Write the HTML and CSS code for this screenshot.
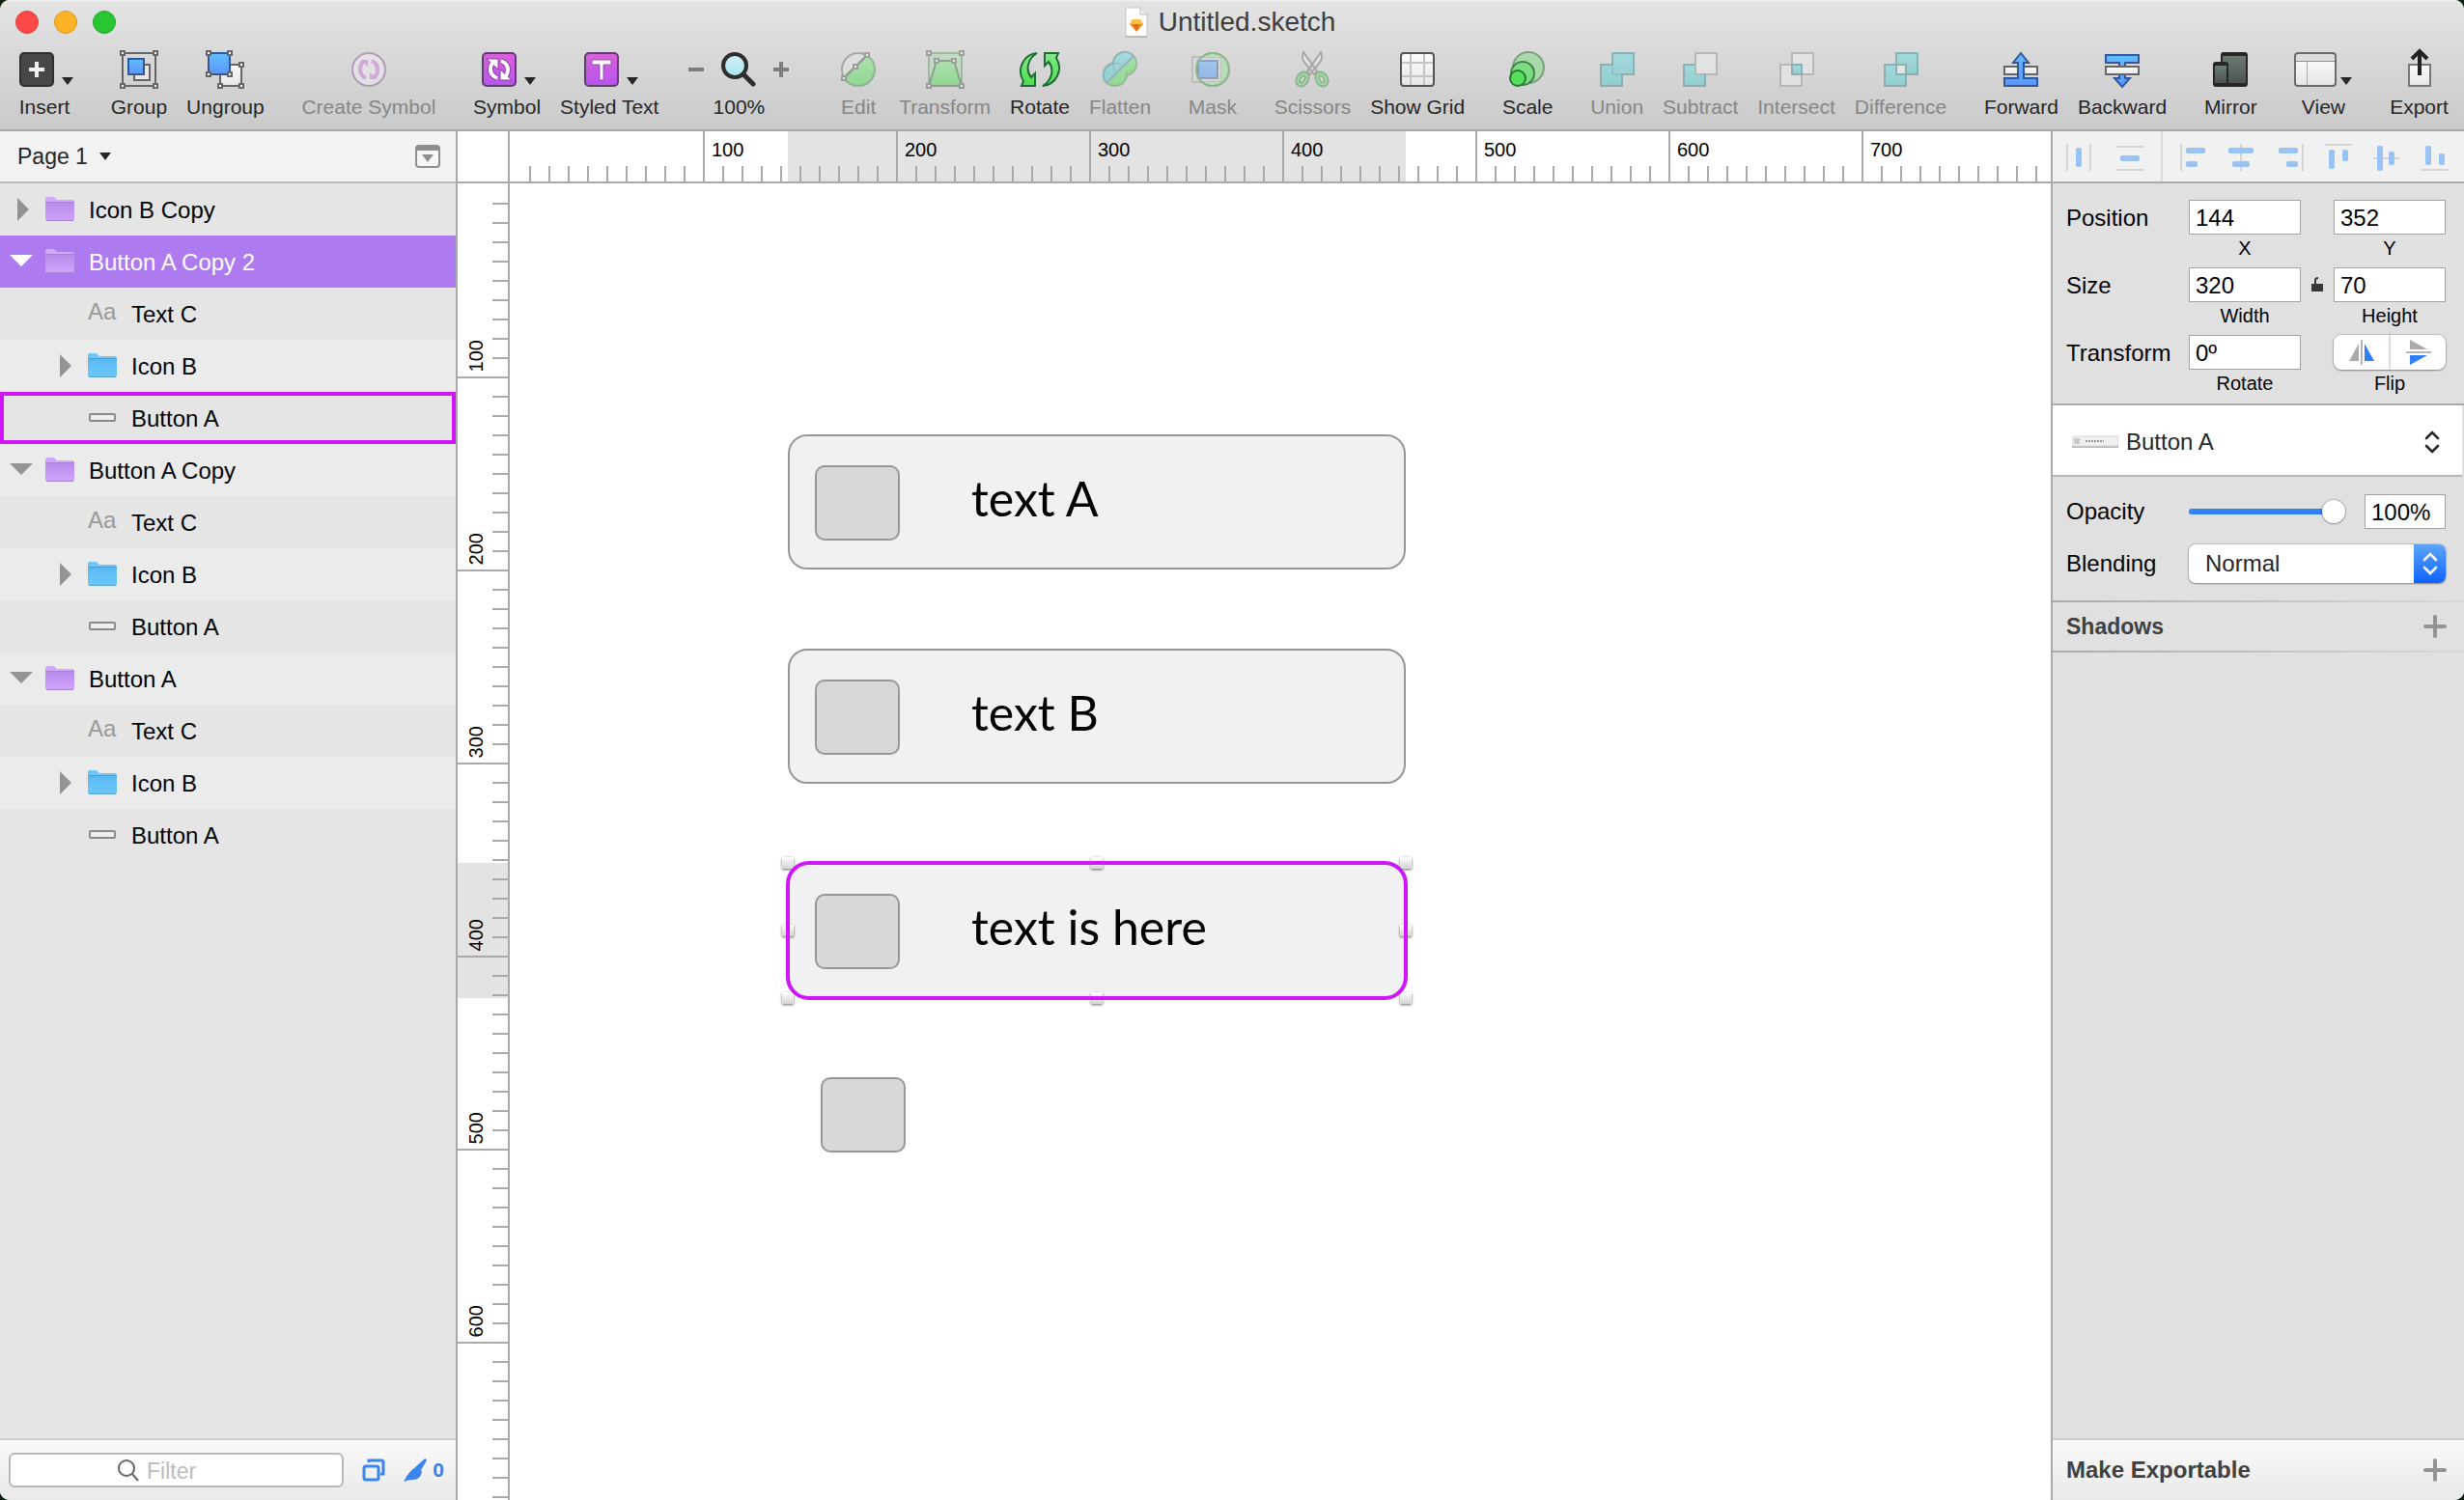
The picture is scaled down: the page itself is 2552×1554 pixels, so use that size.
FILE: index.html
```html
<!DOCTYPE html>
<html lang="en">
<head>
<meta charset="utf-8">
<title>Untitled.sketch</title>
<link rel="stylesheet" href="styles.css">
</head>
<body>
<svg class="defs" aria-hidden="true">
  <defs>
    <linearGradient id="blue" x1="0" y1="0" x2="0" y2="1"><stop offset="0" stop-color="#62bdff"/><stop offset="1" stop-color="#5b96f8"/></linearGradient>
    <linearGradient id="pink" x1="0" y1="0" x2="0" y2="1"><stop offset="0" stop-color="#d862d8"/><stop offset="1" stop-color="#b754ee"/></linearGradient>
    <linearGradient id="green" x1="0" y1="0" x2="0" y2="1"><stop offset="0" stop-color="#84e88a"/><stop offset="1" stop-color="#4fdc50"/></linearGradient>
    <linearGradient id="teal" x1="0" y1="0" x2="0" y2="1"><stop offset="0" stop-color="#74dbe0"/><stop offset="1" stop-color="#4fcbca"/></linearGradient>
    <linearGradient id="paper" x1="0" y1="0" x2="0" y2="1"><stop offset="0" stop-color="#fdfdfd"/><stop offset="1" stop-color="#e6e6e6"/></linearGradient>
    <linearGradient id="slate" x1="0" y1="0" x2="0" y2="1"><stop offset="0" stop-color="#6b7a72"/><stop offset="1" stop-color="#4b554f"/></linearGradient>
    <linearGradient id="lens" x1="0" y1="0" x2="0" y2="1"><stop offset="0" stop-color="#d5f1fb"/><stop offset="1" stop-color="#a4e6ee"/></linearGradient>
    <linearGradient id="folder-purple" x1="0" y1="0" x2="0" y2="1"><stop offset="0" stop-color="#b98cec"/><stop offset="1" stop-color="#cda2fb"/></linearGradient>
    <linearGradient id="folder-blue" x1="0" y1="0" x2="0" y2="1"><stop offset="0" stop-color="#5cbaf2"/><stop offset="1" stop-color="#69c7fa"/></linearGradient>
    <symbol id="node" viewBox="0 0 6 6"><rect x="1" y="1" width="4" height="4" fill="#fff" stroke="#666" stroke-width="2"/></symbol>
    <symbol id="caret" viewBox="0 0 12 8"><path d="M0 0h12L6 8z" fill="currentColor"/></symbol>
    <symbol id="closed" viewBox="0 0 24 24"><path d="M8 0l12 12L8 24z" fill="currentColor"/></symbol>
    <symbol id="open" viewBox="0 0 24 24"><path d="M0 5h24L12 17z" fill="currentColor"/></symbol>
    <symbol id="group-purple" viewBox="0 0 30 26"><path d="M0 24V2q0-2 2-2h7l3 3h16q2 0 2 2v19z" fill="#d1a9fb"/><path d="M0 6h30v17q0 1-1 1H1q-1 0-1-1z" fill="url(#folder-purple)"/><path d="M0 5.5h30" stroke="#a97fd9"/><path d="M1 24.5h28" stroke="#a583cb"/></symbol>
    <symbol id="group-blue" viewBox="0 0 30 26"><path d="M0 24V2q0-2 2-2h7l3 3h16q2 0 2 2v19z" fill="#72c6f6"/><path d="M0 6h30v17q0 1-1 1H1q-1 0-1-1z" fill="url(#folder-blue)"/><path d="M0 5.5h30" stroke="#419fd6"/><path d="M1 24.5h28" stroke="#5a9fc8"/></symbol>
    <symbol id="shape" viewBox="0 0 30 26"><rect x="2" y="9" width="26" height="7" rx="1" fill="#eee" stroke="#8a8a8a" stroke-width="2"/></symbol>
    <symbol id="plus" viewBox="0 0 24 24"><path d="M12 2v20M2 12h20" stroke="#939393" stroke-width="4" stroke-linecap="round"/></symbol>
    <symbol id="updown" viewBox="0 0 16 26"><path d="M2 9l6-6 6 6M2 17l6 6 6-6" fill="none" stroke="currentColor" stroke-width="2.6" stroke-linecap="round"/></symbol>
  </defs>
</svg>

<div class="window">
  <header class="header">
    <div class="titlebar">
      <div class="lights">
        <button class="light light-close" aria-label="Close"></button>
        <button class="light light-min" aria-label="Minimize"></button>
        <button class="light light-zoom" aria-label="Zoom"></button>
      </div>
      <h1 class="title">
        <svg width="24" height="32" viewBox="0 0 24 32"><path d="M1 1h15l7 7v23H1z" fill="#fff" stroke="#c4c4c4"/><path d="M1 31h22" stroke="#999"/><path d="M16 1v7h7" fill="#eee" stroke="#bbb"/><path d="M8 13h8l3 5-7 8-7-8z" fill="#f08a1d"/><path d="M8 13h8l3 5H5z" fill="#fbc04a"/><path d="M9 18h6l-3 7z" fill="#e3661a"/></svg>
        <span>Untitled.sketch</span>
      </h1>
    </div>
    <nav class="toolbar" aria-label="Toolbar">
      <div class="tools">
        <button class="tool">
          <span class="tool-icon has-caret"><svg width="36" height="44" viewBox="4 0 36 44"><rect x="5" y="5" width="34" height="34" rx="4" fill="#474747" stroke="#2e2e2e" stroke-width="2"/><path d="M22 14v16M14 22h16" stroke="#eee" stroke-width="4"/></svg><svg class="caret" width="12" height="8"><use href="#caret"/></svg></span>
          <span class="tool-label">Insert</span>
        </button>
      </div>
      <div class="tools">
        <button class="tool">
          <span class="tool-icon"><svg width="44" height="44"><rect x="5" y="5" width="34" height="34" fill="none" stroke="#666" stroke-width="2"/><rect x="17" y="17" width="16" height="16" fill="#e8e8e8" stroke="#666" stroke-width="2"/><rect x="11" y="11" width="16" height="16" fill="url(#blue)" stroke="#32569c" stroke-width="2"/><use href="#node" x="2" y="2" width="6" height="6"/><use href="#node" x="36" y="2" width="6" height="6"/><use href="#node" x="2" y="36" width="6" height="6"/><use href="#node" x="36" y="36" width="6" height="6"/></svg></span>
          <span class="tool-label">Group</span>
        </button>
        <button class="tool">
          <span class="tool-icon"><svg width="44" height="44"><rect x="17" y="17" width="22" height="22" fill="url(#paper)" stroke="#666" stroke-width="2"/><rect x="5" y="5" width="22" height="22" fill="url(#blue)" stroke="#32569c" stroke-width="2"/><use href="#node" x="2" y="2" width="6" height="6"/><use href="#node" x="24" y="2" width="6" height="6"/><use href="#node" x="2" y="24" width="6" height="6"/><use href="#node" x="24" y="24" width="6" height="6"/><use href="#node" x="36" y="14" width="6" height="6"/><use href="#node" x="14" y="36" width="6" height="6"/><use href="#node" x="36" y="36" width="6" height="6"/></svg></span>
          <span class="tool-label">Ungroup</span>
        </button>
      </div>
      <div class="tools">
        <button class="tool" disabled>
          <span class="tool-icon"><svg width="44" height="44"><circle cx="22" cy="22" r="17" fill="#f2ecf5" stroke="#8a6699" stroke-width="2"/><path d="M19 31q-6-3-6-9 0-5 3-8M25 13q6 3 6 9 0 5-3 8" fill="none" stroke="#cf7fdc" stroke-width="4"/><path d="M13 12h8v7zM31 32h-8v-7z" fill="#cf7fdc"/></svg></span>
          <span class="tool-label">Create Symbol</span>
        </button>
      </div>
      <div class="tools">
        <button class="tool">
          <span class="tool-icon has-caret"><svg width="36" height="44" viewBox="4 0 36 44"><rect x="5" y="5" width="34" height="34" rx="4" fill="url(#pink)" stroke="#603c70" stroke-width="2"/><path d="M20 31q-7-3-7-9 0-4 2-7M24 13q7 3 7 9 0 4-2 7" fill="none" stroke="#8b3da0" stroke-width="6"/><path d="M9 11h12v11zM35 33H23V22z" fill="#fff" stroke="#8b3da0"/><path d="M20 31q-7-3-7-9 0-4 2-7M24 13q7 3 7 9 0 4-2 7" fill="none" stroke="#fff" stroke-width="4"/></svg><svg class="caret" width="12" height="8"><use href="#caret"/></svg></span>
          <span class="tool-label">Symbol</span>
        </button>
        <button class="tool">
          <span class="tool-icon has-caret"><svg width="36" height="44" viewBox="4 0 36 44"><rect x="5" y="5" width="34" height="34" rx="4" fill="url(#pink)" stroke="#603c70" stroke-width="2"/><path d="M12 12h20v5h-8v16h-4V17h-8z" fill="#fff" stroke="#9a48b8"/></svg><svg class="caret" width="12" height="8"><use href="#caret"/></svg></span>
          <span class="tool-label">Styled Text</span>
        </button>
        <div class="tool tool-zoom">
          <span class="tool-icon"><button class="zoom-step" aria-label="Zoom out"><svg width="16" height="16"><path d="M0 8h16" stroke="#7d7d7d" stroke-width="4"/></svg></button><svg width="36" height="44" viewBox="4 0 36 44"><path d="M27 27l10 10" stroke="#2e2e2e" stroke-width="5" stroke-linecap="round"/><circle cx="18" cy="18" r="12" fill="url(#lens)" stroke="#2e2e2e" stroke-width="4"/></svg><button class="zoom-step" aria-label="Zoom in"><svg width="16" height="16"><path d="M0 8h16M8 0v16" stroke="#7d7d7d" stroke-width="4"/></svg></button></span>
          <span class="tool-label">100%</span>
        </div>
      </div>
      <div class="tools">
        <button class="tool" disabled>
          <span class="tool-icon"><svg width="44" height="44"><circle cx="22" cy="22" r="17" fill="#e4e4e4" stroke="#777" stroke-width="2"/><path d="M31 7.500A17 17 0 1 1 7 30L19 19z" fill="url(#green)" stroke="#4d9955" stroke-width="2"/><path d="M7 31l24-24" stroke="#555" stroke-width="2"/><use href="#node" x="28" y="4" width="6" height="6"/><use href="#node" x="16" y="16" width="6" height="6"/><use href="#node" x="4" y="28" width="6" height="6"/></svg></span>
          <span class="tool-label">Edit</span>
        </button>
        <button class="tool" disabled>
          <span class="tool-icon"><svg width="44" height="44"><rect x="5" y="5" width="34" height="34" fill="#a9dfab" stroke="#6d9a6f" stroke-width="2"/><path d="M13 13h18l8 26H5z" fill="url(#green)" stroke="#456b47" stroke-width="2"/><use href="#node" x="2" y="2" width="6" height="6"/><use href="#node" x="36" y="2" width="6" height="6"/><use href="#node" x="2" y="36" width="6" height="6"/><use href="#node" x="36" y="36" width="6" height="6"/><use href="#node" x="10" y="10" width="6" height="6"/><use href="#node" x="28" y="10" width="6" height="6"/></svg></span>
          <span class="tool-label">Transform</span>
        </button>
        <button class="tool">
          <span class="tool-icon"><svg width="46" height="44"><path d="M20 5C7 6-2 21 6 34L4 39h14V26l-4 4C8 23 10 11 20 5z" fill="url(#green)" stroke="#1f6b36" stroke-width="2"/><path d="M26 39c13-1 22-16 14-29l2-5H28v13l4-4c6 7 4 19-6 25z" fill="url(#green)" stroke="#1f6b36" stroke-width="2"/></svg></span>
          <span class="tool-label">Rotate</span>
        </button>
        <button class="tool" disabled>
          <span class="tool-icon"><svg width="44" height="44"><circle cx="27" cy="16" r="12" fill="url(#green)" stroke="#55a05c" stroke-width="2"/><circle cx="17" cy="27" r="12" fill="url(#green)" stroke="#55a05c" stroke-width="2"/><path d="M17 22L27 13l8 6-12 12z" fill="#66e06b"/><path d="M8 36A12 12 0 0 1 15 16 12 12 0 0 1 36 8z" fill="url(#teal)" stroke="#4b979b" stroke-width="2"/><path d="M15 16q8-2 11 4M15 16q0 8 3 11" fill="none" stroke="#4b979b"/></svg></span>
          <span class="tool-label">Flatten</span>
        </button>
      </div>
      <div class="tools">
        <button class="tool" disabled>
          <span class="tool-icon"><svg width="44" height="44"><rect x="1" y="9" width="28" height="26" fill="#ddd" stroke="#a5a5a5" stroke-width="2"/><circle cx="22" cy="22" r="17" fill="#9fe3a2" stroke="#4d9955" stroke-width="2"/><rect x="6" y="10" width="24" height="24" fill="#eee" stroke="#aaa"/><rect x="7" y="13" width="20" height="18" fill="url(#blue)" stroke="#4467a8" stroke-width="2"/><circle cx="22" cy="22" r="17" fill="none" stroke="#4d9955" stroke-width="2"/></svg></span>
          <span class="tool-label">Mask</span>
        </button>
      </div>
      <div class="tools">
        <button class="tool" disabled>
          <span class="tool-icon"><svg width="44" height="44"><path d="M13 4q-2 5 0 9l11 14 3-3zM31 4q2 5 0 9L20 27l-3-3z" fill="#eee" stroke="#777" stroke-width="2"/><ellipse cx="12" cy="32" rx="6" ry="8" transform="rotate(30 12 32)" fill="#7fdc85" stroke="#449a4d" stroke-width="2"/><ellipse cx="32" cy="32" rx="6" ry="8" transform="rotate(-30 32 32)" fill="#7fdc85" stroke="#449a4d" stroke-width="2"/><ellipse cx="12" cy="32" rx="2" ry="4" transform="rotate(30 12 32)" fill="#eee" stroke="#449a4d" stroke-width="2"/><ellipse cx="32" cy="32" rx="2" ry="4" transform="rotate(-30 32 32)" fill="#eee" stroke="#449a4d" stroke-width="2"/></svg></span>
          <span class="tool-label">Scissors</span>
        </button>
        <button class="tool">
          <span class="tool-icon"><svg width="44" height="44"><rect x="5" y="5" width="34" height="34" rx="3" fill="url(#paper)"/><path d="M15 5v34M29 5v34M5 15h34M5 29h34" stroke="#c4c4c4" stroke-width="2"/><rect x="5" y="5" width="34" height="34" rx="3" fill="none" stroke="#555" stroke-width="2"/></svg></span>
          <span class="tool-label">Show Grid</span>
        </button>
      </div>
      <div class="tools">
        <button class="tool">
          <span class="tool-icon"><svg width="44" height="44"><circle cx="23" cy="20" r="16" fill="#a9d9ab" stroke="#7ba17d" stroke-width="2"/><circle cx="17" cy="26" r="12" fill="#7bdc80" stroke="#3f8348" stroke-width="2"/><circle cx="12" cy="31" r="8" fill="#55df5b" stroke="#2a7535" stroke-width="2"/></svg></span>
          <span class="tool-label">Scale</span>
        </button>
      </div>
      <div class="tools">
        <button class="tool" disabled>
          <span class="tool-icon"><svg width="44" height="44"><path d="M17 5h22v22H27v12H5V17h12z" fill="url(#teal)" stroke="#3f8c90" stroke-width="2"/><path d="M17 17v10h10" fill="none" stroke="#3f8c90"/></svg></span>
          <span class="tool-label">Union</span>
        </button>
        <button class="tool" disabled>
          <span class="tool-icon"><svg width="44" height="44"><rect x="5" y="17" width="22" height="22" fill="url(#teal)" stroke="#3f8c90" stroke-width="2"/><rect x="17" y="5" width="22" height="22" fill="#eee" stroke="#999" stroke-width="2"/></svg></span>
          <span class="tool-label">Subtract</span>
        </button>
        <button class="tool" disabled>
          <span class="tool-icon"><svg width="44" height="44"><rect x="5" y="17" width="22" height="22" fill="#eee" stroke="#999" stroke-width="2"/><rect x="17" y="5" width="22" height="22" fill="#eee" stroke="#999" stroke-width="2"/><rect x="17" y="17" width="10" height="10" fill="url(#teal)" stroke="#3f8c90" stroke-width="2"/></svg></span>
          <span class="tool-label">Intersect</span>
        </button>
        <button class="tool" disabled>
          <span class="tool-icon"><svg width="44" height="44"><rect x="5" y="17" width="22" height="22" fill="url(#teal)" stroke="#3f8c90" stroke-width="2"/><rect x="17" y="5" width="22" height="22" fill="url(#teal)" stroke="#3f8c90" stroke-width="2"/><rect x="17" y="17" width="10" height="10" fill="#f4f4f4" stroke="#3f8c90" stroke-width="2"/></svg></span>
          <span class="tool-label">Difference</span>
        </button>
      </div>
      <div class="tools">
        <button class="tool">
          <span class="tool-icon"><svg width="44" height="44"><rect x="5" y="19" width="34" height="8" fill="url(#paper)" stroke="#666" stroke-width="2"/><path d="M5 31h14V15h-5l8-10 8 10h-5v16h14v8H5z" fill="url(#blue)" stroke="#32569c" stroke-width="2"/></svg></span>
          <span class="tool-label">Forward</span>
        </button>
        <button class="tool">
          <span class="tool-icon"><svg width="44" height="44"><path d="M5 7h34v8H25v16h5l-8 9-8-9h5V15H5z" fill="url(#blue)" stroke="#32569c" stroke-width="2"/><rect x="5" y="19" width="34" height="8" fill="url(#paper)" stroke="#666" stroke-width="2"/></svg></span>
          <span class="tool-label">Backward</span>
        </button>
      </div>
      <div class="tools">
        <button class="tool">
          <span class="tool-icon"><svg width="44" height="44"><rect x="12" y="4" width="28" height="36" rx="3" fill="#262626"/><path d="M14 8h24v28H14z" fill="url(#slate)"/><rect x="4" y="14" width="16" height="26" rx="3" fill="#262626"/><path d="M6 18h12v18H6z" fill="url(#slate)"/></svg></span>
          <span class="tool-label">Mirror</span>
        </button>
      </div>
      <div class="tools">
        <button class="tool tool-view">
          <span class="tool-icon"><svg width="44" height="44"><rect x="1" y="5" width="42" height="34" rx="3" fill="url(#paper)"/><path d="M2 6h40v7H2z" fill="#dedede"/><path d="M1 13.500h42" stroke="#84909a"/><path d="M13.500 14v25" stroke="#aaa"/><rect x="1" y="5" width="42" height="34" rx="3" fill="none" stroke="#6a6a6a" stroke-width="2"/></svg><svg class="caret" width="12" height="8"><use href="#caret"/></svg></span>
          <span class="tool-label">View</span>
        </button>
      </div>
      <div class="tools">
        <button class="tool">
          <span class="tool-icon"><svg width="44" height="44"><rect x="11" y="17" width="22" height="22" fill="url(#paper)" stroke="#777" stroke-width="2"/><path d="M22 28V4M14 11l8-8 8 8" fill="none" stroke="#222" stroke-width="4"/></svg></span>
          <span class="tool-label">Export</span>
        </button>
      </div>
    </nav>
  </header>

  <div class="workspace">
    <aside class="sidebar">
      <div class="pagebar">
        <button class="page-select">Page 1 <svg width="12" height="8"><use href="#caret"/></svg></button>
        <button class="icon-button" aria-label="Page list"><svg width="26" height="24"><rect x="1" y="1" width="24" height="22" rx="3" fill="#f6f6f6" stroke="#8e8e8e" stroke-width="2"/><path d="M1 1h24v5H1z" fill="#8e8e8e"/><path d="M7 10h12l-6 8z" fill="#8e8e8e"/></svg></button>
      </div>
      <ul class="layers">
        <li class="layer"><svg class="twist"><use href="#closed"/></svg><svg class="kind"><use href="#group-purple"/></svg><span class="layer-name">Icon B Copy</span></li>
        <li class="layer is-selected"><svg class="twist"><use href="#open"/></svg><svg class="kind"><use href="#group-purple"/></svg><span class="layer-name">Button A Copy 2</span></li>
        <li class="layer is-child"><span class="twist"></span><span class="kind kind-text">Aa</span><span class="layer-name">Text C</span></li>
        <li class="layer is-child is-light"><svg class="twist"><use href="#closed"/></svg><svg class="kind"><use href="#group-blue"/></svg><span class="layer-name">Icon B</span></li>
        <li class="layer is-child is-hovered"><span class="twist"></span><svg class="kind"><use href="#shape"/></svg><span class="layer-name">Button A</span></li>
        <li class="layer is-light"><svg class="twist"><use href="#open"/></svg><svg class="kind"><use href="#group-purple"/></svg><span class="layer-name">Button A Copy</span></li>
        <li class="layer is-child"><span class="twist"></span><span class="kind kind-text">Aa</span><span class="layer-name">Text C</span></li>
        <li class="layer is-child is-light"><svg class="twist"><use href="#closed"/></svg><svg class="kind"><use href="#group-blue"/></svg><span class="layer-name">Icon B</span></li>
        <li class="layer is-child"><span class="twist"></span><svg class="kind"><use href="#shape"/></svg><span class="layer-name">Button A</span></li>
        <li class="layer is-light"><svg class="twist"><use href="#open"/></svg><svg class="kind"><use href="#group-purple"/></svg><span class="layer-name">Button A</span></li>
        <li class="layer is-child"><span class="twist"></span><span class="kind kind-text">Aa</span><span class="layer-name">Text C</span></li>
        <li class="layer is-child is-light"><svg class="twist"><use href="#closed"/></svg><svg class="kind"><use href="#group-blue"/></svg><span class="layer-name">Icon B</span></li>
        <li class="layer is-child"><span class="twist"></span><svg class="kind"><use href="#shape"/></svg><span class="layer-name">Button A</span></li>
      </ul>
      <div class="filterbar">
        <label class="filter">
          <svg width="22" height="24"><circle cx="9" cy="10" r="8" fill="none" stroke="#666" stroke-width="2"/><path d="M15 16l6 7" stroke="#666" stroke-width="2"/></svg>
          <input class="filter-input" type="text" placeholder="Filter" aria-label="Filter">
        </label>
        <button class="icon-button" aria-label="Filter symbols"><svg width="24" height="24" fill="none" stroke="#3b86ee" stroke-width="3"><rect x="2" y="8" width="15" height="14" rx="2"/><path d="M7 4V2h13q2 0 2 2v12h-3"/></svg></button>
        <button class="slices"><svg width="24" height="24"><path d="M0 24Q5 14 11 10L21 1q2-2 3 1l-6 10 1 2q-2 8-9 8-5 0-10 2z" fill="#3b86ee"/></svg>0</button>
      </div>
    </aside>

    <main class="stage">
      <div class="corner"></div>
      <ol class="ruler ruler-x"><li></li><li>100</li><li>200</li><li>300</li><li>400</li><li>500</li><li>600</li><li>700</li></ol>
      <ol class="ruler ruler-y"><li></li><li><span>100</span></li><li><span>200</span></li><li><span>300</span></li><li><span>400</span></li><li><span>500</span></li><li><span>600</span></li></ol>
      <div class="canvas">
        <div class="shape shape-a"><i class="swatch"></i><span>text A</span></div>
        <div class="shape shape-b"><i class="swatch"></i><span>text B</span></div>
        <div class="shape shape-c"><i class="swatch"></i><span>text is here</span>
          <i class="handle h-w h-n"></i><i class="handle h-n"></i><i class="handle h-e h-n"></i>
          <i class="handle h-w"></i><i class="handle h-e"></i>
          <i class="handle h-w h-s"></i><i class="handle h-s"></i><i class="handle h-e h-s"></i>
          <b class="outline"></b>
        </div>
        <i class="swatch swatch-loose"></i>
      </div>
    </main>

    <aside class="inspector">
      <div class="alignbar">
        <div class="distribute">
          <button class="icon-button" aria-label="Distribute horizontally"><svg width="28" height="28"><path class="guide" d="M2 0v28M26 0v28"/><rect class="bar" x="11" y="4" width="6" height="20" rx="2"/></svg></button>
          <button class="icon-button" aria-label="Distribute vertically"><svg width="28" height="28"><path class="guide" d="M0 3h28M0 27h28"/><rect class="bar" x="4" y="12" width="20" height="6" rx="2"/></svg></button>
        </div>
        <div class="align">
          <button class="icon-button" aria-label="Align left"><svg width="28" height="28"><path class="guide" d="M1 0v28"/><rect class="bar" x="6" y="4" width="20" height="6" rx="2"/><rect class="bar" x="6" y="18" width="12" height="6" rx="2"/></svg></button>
          <button class="icon-button" aria-label="Align center"><svg width="28" height="28"><path class="guide" d="M13 0v28"/><rect class="bar" x="0" y="4" width="26" height="6" rx="2"/><rect class="bar" x="4" y="18" width="18" height="6" rx="2"/></svg></button>
          <button class="icon-button" aria-label="Align right"><svg width="28" height="28"><path class="guide" d="M27 0v28"/><rect class="bar" x="2" y="4" width="20" height="6" rx="2"/><rect class="bar" x="10" y="18" width="12" height="6" rx="2"/></svg></button>
          <button class="icon-button" aria-label="Align top"><svg width="28" height="28"><path class="guide" d="M0 1h28"/><rect class="bar" x="4" y="6" width="6" height="20" rx="2"/><rect class="bar" x="18" y="6" width="6" height="12" rx="2"/></svg></button>
          <button class="icon-button" aria-label="Align middle"><svg width="28" height="28"><path class="guide" d="M0 15h28"/><rect class="bar" x="4" y="2" width="6" height="26" rx="2"/><rect class="bar" x="16" y="8" width="6" height="14" rx="2"/></svg></button>
          <button class="icon-button" aria-label="Align bottom"><svg width="28" height="28"><path class="guide" d="M0 27h28"/><rect class="bar" x="4" y="2" width="6" height="20" rx="2"/><rect class="bar" x="18" y="10" width="6" height="12" rx="2"/></svg></button>
        </div>
      </div>

      <section class="geometry">
        <div class="row">
          <span class="name">Position</span>
          <div class="cell"><input class="field" id="pos-x" type="text" value="144"><label class="caption" for="pos-x">X</label></div>
          <span></span>
          <div class="cell"><input class="field" id="pos-y" type="text" value="352"><label class="caption" for="pos-y">Y</label></div>
        </div>
        <div class="row">
          <span class="name">Size</span>
          <div class="cell"><input class="field" id="width" type="text" value="320"><label class="caption" for="width">Width</label></div>
          <button class="lock" aria-label="Lock proportions"><svg width="12" height="16"><path d="M4 7V3q0-2 3-2" fill="none" stroke="#383838" stroke-width="2"/><rect y="7" width="12" height="8" fill="#383838"/></svg></button>
          <div class="cell"><input class="field" id="height" type="text" value="70"><label class="caption" for="height">Height</label></div>
        </div>
        <div class="row">
          <span class="name">Transform</span>
          <div class="cell"><input class="field" id="rotate" type="text" value="0º"><label class="caption" for="rotate">Rotate</label></div>
          <span></span>
          <div class="cell">
            <div class="flip">
              <button class="flip-half" aria-label="Flip horizontal"><svg width="26" height="26"><path d="M0 22h10V4z" fill="#aaa"/><path d="M13 0v26" stroke="#b5b5b5" stroke-width="2"/><path d="M16 22h10L16 4z" fill="#2f7ff7"/></svg></button>
              <button class="flip-half" aria-label="Flip vertical"><svg width="26" height="26"><path d="M4 0v10h18z" fill="#aaa"/><path d="M0 13h26" stroke="#b5b5b5" stroke-width="2"/><path d="M4 26V16h18z" fill="#2f7ff7"/></svg></button>
            </div>
            <span class="caption caption-flip">Flip</span>
          </div>
        </div>
      </section>

      <button class="style-picker">
        <svg width="48" height="16"><rect x="0" y="4" width="48" height="10" fill="#bbb"/><rect x="0" y="2" width="48" height="10" fill="#f0f0f0" stroke="#d5d5d5"/><rect x="2" y="4" width="6" height="6" fill="#c8c8c8"/><path d="M14 7h19" stroke="#999" stroke-width="2" stroke-dasharray="2 1"/></svg>
        <span>Button A</span>
        <svg class="push" width="16" height="26"><use href="#updown"/></svg>
      </button>

      <section class="appearance">
        <div class="line">
          <label class="name" for="opacity">Opacity</label>
          <input class="slider" id="opacity" type="range" value="100">
          <input class="field field-small" type="text" value="100%" aria-label="Opacity value">
        </div>
        <div class="line line-tall">
          <label class="name" for="blending">Blending</label>
          <div class="select">
            <select class="select-box" id="blending"><option>Normal</option></select>
            <span class="select-arrow"><svg width="16" height="26"><use href="#updown"/></svg></span>
          </div>
        </div>
      </section>

      <div class="heading"><h2>Shadows</h2><button class="icon-button" aria-label="Add shadow"><svg width="24" height="24"><use href="#plus"/></svg></button></div>
      <div class="exportbar"><h2>Make Exportable</h2><button class="icon-button" aria-label="Add export"><svg width="24" height="24"><use href="#plus"/></svg></button></div>
    </aside>
  </div>
</div>
</body>
</html>
```
FILE: styles.css
```css
*, *::before, *::after { box-sizing: border-box; }

body {
  margin: 0;
  background: #08210f;
  color: #000;
  font: 24px/28px "Liberation Sans", Arial, sans-serif;
}

button, input, select { font: inherit; color: inherit; }
button { padding: 0; border: 0; background: none; }
ul, ol { margin: 0; padding: 0; list-style: none; }
h1, h2 { margin: 0; font-size: 24px; }
svg { display: block; flex: none; }
.defs { position: absolute; width: 0; height: 0; }

.window {
  display: flex;
  flex-direction: column;
  height: 100vh;
  overflow: hidden;
  border-radius: 10px;
  background: #fff;
}

/* Title bar and toolbar */
.header {
  flex: none;
  padding-bottom: 11px;
  border-bottom: 2px solid #a6a6a6;
  background: linear-gradient(#f2f2f2 0, #e3e3e3 2px, #cacaca 100%);
}
.titlebar {
  display: grid;
  grid-template-columns: 1fr auto 1fr;
  align-items: center;
  height: 46px;
  padding: 0 20px 0 16px;
}
.lights { display: flex; gap: 16px; }
.light { width: 24px; height: 24px; border: 1px solid #de3c38; border-radius: 50%; background: #fc4948; }
.light-min { border-color: #dd9420; background: #fdb325; }
.light-zoom { border-color: #1da42b; background: #28c732; }
.title {
  display: flex;
  align-items: center;
  gap: 11px;
  color: #3d3d3d;
  font-size: 28px;
  font-weight: 400;
}
.toolbar { display: flex; justify-content: space-between; padding: 4px 16px 0 16px; }
.tools { display: flex; gap: 20px; }
.tool { display: flex; flex-direction: column; align-items: center; gap: 4px; min-width: 44px; color: #262626; }
.tool-icon { display: flex; align-items: center; justify-content: center; gap: 8px; height: 44px; }
.tool-icon .caret { align-self: flex-end; margin-bottom: 6px; }
.has-caret { padding-left: 4px; }
.tool-view .tool-icon { gap: 4px; }
.tool-label { font-size: 21px; line-height: 25px; white-space: nowrap; }
.tool:disabled { color: #868686; }
.tool:disabled .tool-icon { opacity: .5; }
.tool-zoom { padding: 0 11px; }
.tool-zoom .tool-icon { gap: 18px; }

/* Three columns under the toolbar */
.workspace { display: grid; grid-template-columns: 474px 1fr 428px; flex: 1; min-height: 0; }

.sidebar { display: flex; flex-direction: column; border-right: 2px solid #a9a9a9; background: #e5e5e5; }
.pagebar {
  display: flex;
  align-items: center;
  justify-content: space-between;
  height: 54px;
  padding: 0 16px 0 18px;
  border-bottom: 2px solid #bababa;
  background: #f2f2f2;
}
.page-select { display: flex; align-items: center; gap: 12px; color: #262626; font-size: 23px; }
.layers { flex: 1; }
.layer { display: flex; align-items: center; gap: 13px; height: 54px; padding-left: 10px; white-space: nowrap; }
.layer.is-child { padding-left: 54px; }
.layer.is-light { background: #ebebeb; }
.layer.is-selected { background: #ae7aef; color: #fff; }
.layer.is-hovered { padding-left: 50px; border: 4px solid #d016f8; }
.layer-name { padding: 2px 0 0 2px; }
.twist { width: 24px; height: 24px; color: #939393; }
.is-selected .twist { color: #fff; }
.kind { width: 30px; height: 26px; }
.kind-text { color: #999; line-height: 22px; }
.filterbar {
  display: flex;
  align-items: center;
  gap: 19px;
  height: 64px;
  padding: 0 12px 0 9px;
  border-top: 2px solid #cfcfcf;
  background: linear-gradient(#fafafa, #e9e9e9);
}
.filter {
  display: flex;
  flex: 1;
  align-items: center;
  gap: 8px;
  height: 36px;
  padding-left: 111px;
  border: 2px solid #b8b8b8;
  border-radius: 6px;
  background: #fff;
}
.filter-input { width: 100%; padding: 2px 0 0; border: 0; outline: 0; background: none; font-size: 23px; }
.filter-input::placeholder { color: #bcbcbc; }
.slices { display: flex; align-items: center; gap: 6px; color: #3b7ee8; font-size: 21px; font-weight: 700; }

/* Rulers: one list item for each 100 units, at 2px a unit */
.stage { display: grid; grid-template: 54px 1fr / 54px 1fr; min-width: 0; min-height: 0; }
.corner { border: solid #a9a9a9; border-width: 0 2px 2px 0; }
.ruler { display: flex; overflow: hidden; font-size: 20px; line-height: 24px; }
.ruler li { flex: none; background-repeat: no-repeat; }
.ruler-x { border-bottom: 2px solid #a9a9a9; background: linear-gradient(#e3e3e3, #e3e3e3) 288px 0 / 640px 100% no-repeat; }
.ruler-x li {
  width: 200px;
  padding: 7px 0 0 7px;
  background-image: repeating-linear-gradient(to right, #a9a9a9 0 2px, transparent 2px 20px);
  background-position: 20px 100%;
  background-size: 180px 16px;
  background-origin: border-box;
}
.ruler-x li + li { border-left: 2px solid #a9a9a9; }
.ruler-y {
  flex-direction: column;
  border-right: 2px solid #a9a9a9;
  background: linear-gradient(#e3e3e3, #e3e3e3) 0 704px / 100% 140px no-repeat;
}
.ruler-y li {
  display: flex;
  align-items: flex-start;
  height: 200px;
  padding-left: 7px;
  background-image: repeating-linear-gradient(#a9a9a9 0 2px, transparent 2px 20px);
  background-position: 100% 20px;
  background-size: 16px 180px;
  background-origin: border-box;
}
.ruler-y li + li { border-top: 2px solid #a9a9a9; }
.ruler-y span { margin-top: -40px; writing-mode: vertical-rl; transform: rotate(180deg); }

/* Free canvas: objects sit at their own document coordinates */
.canvas { position: relative; overflow: hidden; background: #fff; }
.shape {
  position: absolute;
  left: 288px;
  display: flex;
  align-items: flex-start;
  gap: 74px;
  width: 640px;
  height: 140px;
  padding: 30px 26px;
  border: 2px solid #979797;
  border-radius: 20px;
  background: #f1f1f1;
  font: 50px/68px Lato, "Liberation Sans", sans-serif;
  white-space: nowrap;
}
.shape-a { top: 260px; }
.shape-b { top: 482px; }
.shape-c { top: 704px; }
.swatch { flex: none; width: 88px; height: 78px; border: 2px solid #979797; border-radius: 10px; background: #d8d8d8; }
.swatch-loose { position: absolute; left: 322px; top: 926px; }
.outline { position: absolute; inset: -4px; border: 4px solid #d016f8; border-radius: 24px; }
.handle {
  position: absolute;
  left: 312px;
  top: 62px;
  width: 12px;
  height: 12px;
  border-radius: 1px;
  background: linear-gradient(#fff, #d4d4d4);
  box-shadow: 0 1px 3px rgba(0, 0, 0, .6);
}
.h-w { left: -8px; }
.h-e { left: 632px; }
.h-n { top: -8px; }
.h-s { top: 132px; }

/* Inspector */
.inspector { display: flex; flex-direction: column; border-left: 2px solid #a9a9a9; background: #e0e0e0; }
.alignbar { display: flex; height: 54px; border-bottom: 2px solid #a9a9a9; background: #f1f1f1; }
.distribute, .align { display: flex; align-items: center; justify-content: space-between; padding-top: 2px; }
.distribute { width: 114px; padding-right: 18px; padding-left: 13px; border-right: 2px solid #dcdcdc; }
.align { flex: 1; padding-right: 16px; padding-left: 18px; }
.guide { stroke: #d4d4d4; stroke-width: 2; }
.bar { fill: #97c3f5; }

.geometry {
  display: flex;
  flex-direction: column;
  gap: 8px;
  padding: 17px 19px 9px 14px;
  border-bottom: 2px solid #a9a9a9;
}
.row { display: grid; grid-template-columns: 1fr 116px 34px 116px; }
.name { line-height: 38px; }
.cell { display: flex; flex-direction: column; gap: 2px; }
.caption { font-size: 20px; line-height: 24px; text-align: center; }
.field {
  width: 100%;
  height: 36px;
  padding: 2px 6px 0;
  border: 1px solid #a3a3a3;
  border-radius: 0;
  outline: 0;
  background: #fff;
}
.field-small { width: 84px; }
.lock { align-self: start; justify-self: center; margin-top: 10px; }
.flip {
  display: flex;
  height: 36px;
  border-radius: 8px;
  background: #fff;
  box-shadow: 0 0 1px 1px rgba(0, 0, 0, .15), 0 1px 2px rgba(0, 0, 0, .3);
}
.flip-half { display: flex; flex: 1; align-items: center; justify-content: center; }
.flip-half + .flip-half { border-left: 2px solid #ddd; }

.style-picker {
  display: flex;
  align-items: center;
  gap: 8px;
  height: 74px;
  margin-right: 2px;
  padding: 4px 23px 0 20px;
  border-bottom: 2px solid #b5b5b5;
  background: #fff;
  color: #262626;
}
.push { margin-left: auto; }

.appearance {
  display: flex;
  flex-direction: column;
  gap: 17px;
  padding: 17px 19px 18px 14px;
  border-bottom: 2px solid;
  border-image: linear-gradient(to right, #ababab, #d8d8d8) 1;
}
.line { display: grid; grid-template-columns: 1fr 162px 104px; align-items: center; height: 36px; }
.line .field-small { justify-self: end; }
.line-tall { grid-template-columns: 1fr 266px; height: 40px; }
.slider { width: 100%; height: 24px; margin: 0; appearance: none; background: none; }
.slider::-webkit-slider-runnable-track { height: 6px; border-radius: 3px; background: #2f82f8; }
.slider::-webkit-slider-thumb {
  width: 24px;
  height: 24px;
  margin-top: -9px;
  appearance: none;
  border-radius: 50%;
  background: #fff;
  box-shadow: 0 0 1px 1px rgba(0, 0, 0, .2), 0 1px 2px rgba(0, 0, 0, .2);
}
.select {
  display: flex;
  height: 40px;
  overflow: hidden;
  border-radius: 7px;
  background: #fff;
  box-shadow: 0 0 1px 1px rgba(0, 0, 0, .15), 0 1px 2px rgba(0, 0, 0, .3);
}
.select-box { flex: 1; padding: 0 17px; appearance: none; border: 0; background: none; color: #262626; }
.select-arrow {
  display: flex;
  align-items: center;
  justify-content: center;
  width: 33px;
  background: linear-gradient(#5ca5f8, #0d63fd);
  color: #fff;
}

.heading, .exportbar { display: flex; align-items: center; justify-content: space-between; padding: 0 18px 0 14px; color: #404040; }
.heading { height: 52px; border-bottom: 2px solid; border-image: linear-gradient(to right, #ababab, #d8d8d8) 1; }
.heading h2 { font-size: 23px; }
.exportbar { height: 64px; margin-top: auto; border-top: 2px solid #cfcfcf; background: linear-gradient(#fafafa, #e9e9e9); }
```
